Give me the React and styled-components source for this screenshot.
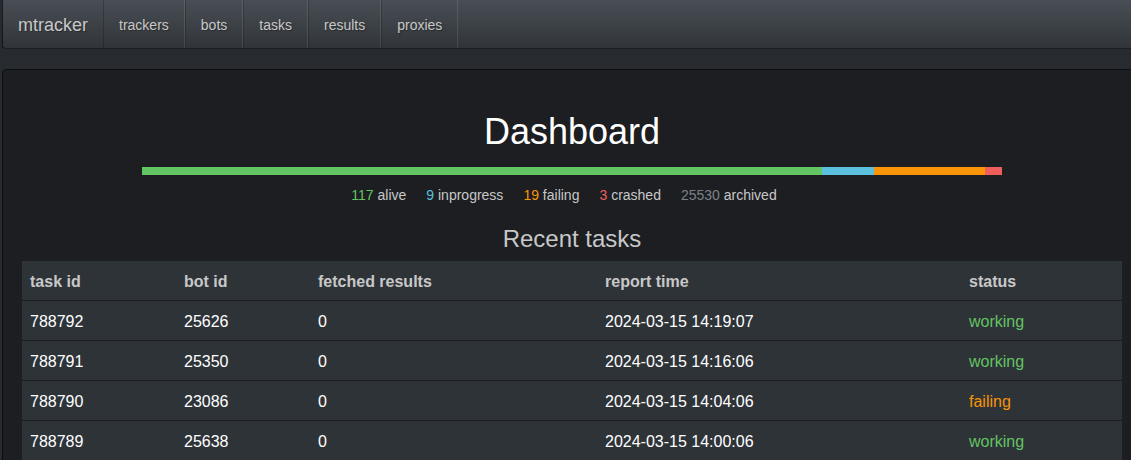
import styled, { createGlobalStyle } from "styled-components";

const GlobalStyle = createGlobalStyle`
  html, body {
    margin: 0;
    padding: 0;
    background: #272b30;
    overflow: hidden;
  }
  body {
    font-family: "Liberation Sans", Arial, sans-serif;
    font-size: 14px;
    color: #c8c8c8;
  }
`;

const Page = styled.div`
  padding-left: 2px;
  width: 1140px;
`;

const Navbar = styled.nav`
  display: flex;
  height: 49px;
  box-sizing: border-box;
  padding-top: 2px;
  background-image: linear-gradient(#484e55, #3a3f44 60%, #313539);
  border: 1px solid rgba(0, 0, 0, 0.6);
  border-top: 0;
  border-radius: 0 0 4px 4px;
  text-shadow: 1px 1px 1px rgba(0, 0, 0, 0.3);
`;

const Brand = styled.a`
  display: flex;
  align-items: center;
  padding: 0 15px;
  font-size: 18px;
  color: #c8c8c8;
`;

const NavLink = styled.a`
  display: flex;
  align-items: center;
  margin-top: -2px;
  padding: 2px 15px 0;
  font-size: 14px;
  color: #c8c8c8;
  border-left: 1px solid rgba(0, 0, 0, 0.2);
  border-right: 1px solid rgba(255, 255, 255, 0.1);
`;

const Well = styled.main`
  margin-top: 20px;
  padding: 19px;
  min-height: 420px;
  background: #1c1e22;
  border: 1px solid #0c0d0e;
  border-radius: 4px;
`;

const Title = styled.h1`
  margin: 23px 0 0;
  font-size: 36px;
  font-weight: 500;
  line-height: 40px;
  text-align: center;
  color: #fff;
`;

const Progress = styled.div`
  display: flex;
  height: 8px;
  margin: 15px 120px 0;
`;

const Segment = styled.div`
  height: 100%;
  background: ${(p) => p.color};
`;

const Stats = styled.div`
  display: flex;
  justify-content: center;
  gap: 20px;
  margin-top: 10px;
  padding-right: 16px;
  line-height: 20px;
`;

const Num = styled.span`
  color: ${(p) => p.color};
`;

const Subtitle = styled.h3`
  margin: 21px 0 9px;
  font-size: 24px;
  font-weight: 500;
  line-height: 26px;
  text-align: center;
  color: #c8c8c8;
`;

const Table = styled.table`
  width: 1100px;
  border-collapse: collapse;
  background: #2e3338;
  font-size: 16px;
  table-layout: fixed;
`;

const Th = styled.th`
  width: ${(p) => p.w}px;
  padding: 10px 8px 6px;
  height: 39px;
  box-sizing: border-box;
  text-align: left;
  font-weight: bold;
  color: #c8c8c8;
  border-bottom: 1px solid #1c1e22;
`;

const Td = styled.td`
  padding: 10px 8px 6px;
  height: 40px;
  box-sizing: border-box;
  color: ${(p) => p.color || "#fff"};
  border-top: 1px solid #1c1e22;
`;

const colors = {
  alive: "#62c462",
  inprogress: "#5bc0de",
  failing: "#f89406",
  crashed: "#ee5f5b",
  archived: "#7a8288",
};

const stats = [
  { key: "alive", n: 117 },
  { key: "inprogress", n: 9 },
  { key: "failing", n: 19 },
  { key: "crashed", n: 3 },
];

const columns = [
  ["task id", 154],
  ["bot id", 134],
  ["fetched results", 287],
  ["report time", 364],
  ["status", 161],
];

const tasks = [
  ["788792", "25626", "0", "2024-03-15 14:19:07", "working"],
  ["788791", "25350", "0", "2024-03-15 14:16:06", "working"],
  ["788790", "23086", "0", "2024-03-15 14:04:06", "failing"],
  ["788789", "25638", "0", "2024-03-15 14:00:06", "working"],
];

const statusColor = { working: "#62c462", failing: "#f89406" };

function App() {
  const total = stats.reduce((s, x) => s + x.n, 0);
  return (
    <Page>
      <GlobalStyle />
      <Navbar>
        <Brand>mtracker</Brand>
        {["trackers", "bots", "tasks", "results", "proxies"].map((l) => (
          <NavLink key={l}>{l}</NavLink>
        ))}
      </Navbar>
      <Well>
        <Title>Dashboard</Title>
        <Progress>
          {stats.map((s) => (
            <Segment
              key={s.key}
              color={colors[s.key]}
              style={{ width: `${(s.n / total) * 100}%` }}
            />
          ))}
        </Progress>
        <Stats>
          {stats.map((s) => (
            <span key={s.key}>
              <Num color={colors[s.key]}>{s.n}</Num> {s.key}
            </span>
          ))}
          <span>
            <Num color={colors.archived}>25530</Num> archived
          </span>
        </Stats>
        <Subtitle>Recent tasks</Subtitle>
        <Table>
          <thead>
            <tr>
              {columns.map(([c, w]) => (
                <Th key={c} w={w}>
                  {c}
                </Th>
              ))}
            </tr>
          </thead>
          <tbody>
            {tasks.map((t) => (
              <tr key={t[0]}>
                <Td>{t[0]}</Td>
                <Td>{t[1]}</Td>
                <Td>{t[2]}</Td>
                <Td>{t[3]}</Td>
                <Td color={statusColor[t[4]]}>{t[4]}</Td>
              </tr>
            ))}
          </tbody>
        </Table>
      </Well>
    </Page>
  );
}

export default App;
